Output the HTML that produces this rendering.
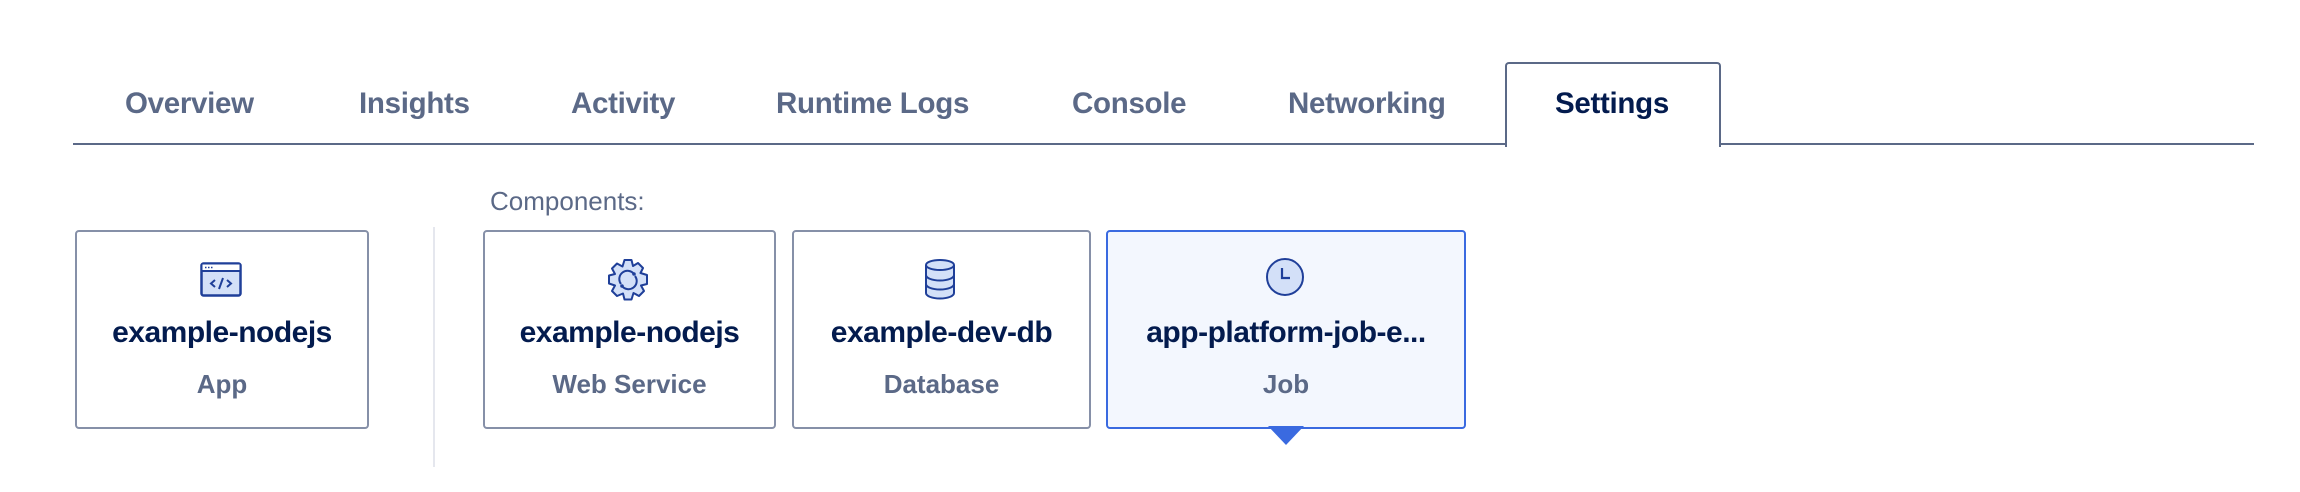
<!DOCTYPE html>
<html><head><meta charset="utf-8"><style>
body{margin:0;width:2300px;height:492px;background:#fff;position:relative;overflow:hidden;font-family:"Liberation Sans",sans-serif}
.t{position:absolute;top:85px;font-size:29.5px;font-weight:bold;color:#5b6987;line-height:38px;white-space:nowrap;letter-spacing:-0.3px}
.line{position:absolute;top:143px;height:2px;background:#5b6987}
.tab{position:absolute;left:1505px;top:62px;width:212px;height:83px;border:2px solid #5b6987;border-bottom:none;border-radius:4px 4px 0 0;background:#fff}
.card{position:absolute;top:230px;height:195px;border:2px solid #8690a8;border-radius:4px;box-sizing:content-box}
.w{position:absolute;top:0}
.name{position:absolute;left:0;right:0;top:314px;font-size:30px;font-weight:bold;color:#031b4e;letter-spacing:-0.5px;line-height:38px;text-align:center;white-space:nowrap}
.sub{position:absolute;left:0;right:0;top:367px;font-size:26px;font-weight:bold;color:#5b6987;line-height:34px;text-align:center}
svg{position:absolute}
</style></head><body>
<div class="t" style="left:125px">Overview</div>
<div class="t" style="left:359px">Insights</div>
<div class="t" style="left:571px">Activity</div>
<div class="t" style="left:776px">Runtime Logs</div>
<div class="t" style="left:1072px">Console</div>
<div class="t" style="left:1288px">Networking</div>
<div class="line" style="left:73px;width:1434px"></div>
<div class="line" style="left:1717px;width:537px"></div>
<div class="tab"></div>
<div class="t" style="left:1555px;color:#031b4e">Settings</div>

<div style="position:absolute;left:490px;top:185px;font-size:26px;color:#5b6987;line-height:32px">Components:</div>
<div style="position:absolute;left:433px;top:227px;width:2px;height:240px;background:#e5e7ee"></div>

<div class="card" style="left:75px;width:290px"></div>
<div class="card" style="left:483px;width:289px"></div>
<div class="card" style="left:792px;width:295px"></div>
<div class="card" style="left:1106px;width:356px;border-color:#3a6ae0;background:#f3f7fe"></div>
<svg style="left:1268px;top:426px" width="36" height="20"><path d="M0 0H36L18 19Z" fill="#3a6ae0"/></svg>

<svg style="left:200px;top:262px" width="42" height="35" viewBox="0 0 42 35"><rect x="1.5" y="1.5" width="39" height="32" rx="2" fill="#d3e0f8" stroke="#1f3f99" stroke-width="2.5"/><rect x="2.5" y="2.5" width="37" height="6" fill="#fff"/><line x1="2" y1="9" x2="40" y2="9" stroke="#1f3f99" stroke-width="2"/><path d="M5 5.5h1.5M8 5.5h1.5M11 5.5h1.5" stroke="#1f3f99" stroke-width="1.5"/><path d="M15 18l-4 3.5 4 3.5M27 18l4 3.5-4 3.5M23 16l-4 11" stroke="#1f3f99" stroke-width="2" fill="none"/></svg>

<svg style="left:606px;top:258px" width="44" height="44" viewBox="-22 -22 44 44"><path d="M-3.5 -20 L3.5 -20 L5 -14 L10 -17 L15 -12 L12.5 -7 L19 -5 L19 4 L13 5.5 L16 11 L11 16 L5.5 13 L3.5 19.5 L-3.5 19.5 L-5 13.5 L-11 16 L-16 11 L-13 5.5 L-19 3.5 L-19 -4.5 L-13 -6 L-16 -11.5 L-11 -16.5 L-5.5 -13.5 Z" fill="#d3e0f8" stroke="#1f3f99" stroke-width="2" stroke-linejoin="round"/><path d="M-7 4A8 8 0 0 1 6 -6M7 -4A8 8 0 0 1 -6 6" fill="none" stroke="#1f3f99" stroke-width="2"/><circle cx="6" cy="-6" r="1.8" fill="#1f3f99"/><circle cx="-6" cy="6" r="1.8" fill="#1f3f99"/></svg>

<svg style="left:924px;top:258px" width="32" height="43" viewBox="0 0 32 43"><path d="M2 7v28c0 3 6 5.5 14 5.5s14-2.5 14-5.5V7" fill="#d3e0f8" stroke="#1f3f99" stroke-width="2"/><ellipse cx="16" cy="7" rx="14" ry="5" fill="#d3e0f8" stroke="#1f3f99" stroke-width="2"/><path d="M2 17c0 3 6 5.5 14 5.5s14-2.5 14-5.5M2 26c0 3 6 5.5 14 5.5s14-2.5 14-5.5" fill="none" stroke="#1f3f99" stroke-width="2"/></svg>

<svg style="left:1265px;top:257px" width="40" height="40" viewBox="0 0 40 40"><circle cx="20" cy="20" r="18" fill="#d3e0f8" stroke="#1f3f99" stroke-width="2"/><path d="M17 11v10h8" fill="none" stroke="#1f3f99" stroke-width="2.2"/></svg>

<div class="w" style="left:75px;width:294px"><div class="name">example-nodejs</div><div class="sub">App</div></div>
<div class="w" style="left:483px;width:293px"><div class="name">example-nodejs</div><div class="sub">Web Service</div></div>
<div class="w" style="left:792px;width:299px"><div class="name">example-dev-db</div><div class="sub">Database</div></div>
<div class="w" style="left:1106px;width:360px"><div class="name">app-platform-job-e...</div><div class="sub">Job</div></div>
</body></html>
